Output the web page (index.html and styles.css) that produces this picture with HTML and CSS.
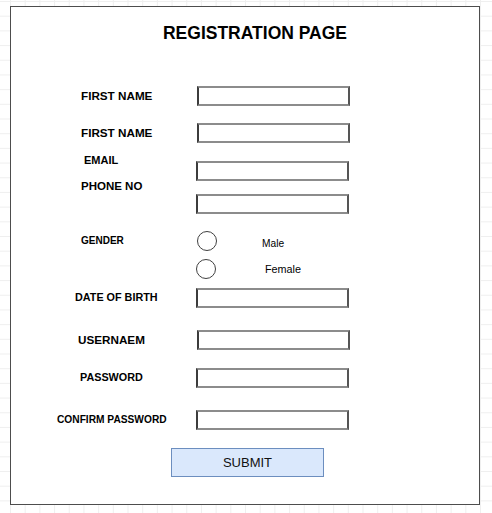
FILE: index.html
```html
<!DOCTYPE html>
<html lang="en">
<head>
<meta charset="utf-8">
<title>Registration Page</title>
<link rel="stylesheet" href="styles.css">
</head>
<body>
<main class="frame">
  <h1 class="title">REGISTRATION PAGE</h1>
  <form class="form">
    <div class="row row-1">
      <label class="cell"><span class="lbl lbl-first">FIRST NAME</span></label>
      <div class="box box-shift"></div>
    </div>
    <div class="row row-2">
      <label class="cell"><span class="lbl lbl-first">FIRST NAME</span></label>
      <div class="box box-shift"></div>
    </div>
    <div class="row row-3">
      <label class="cell"><span class="lbl lbl-email">EMAIL</span></label>
      <div class="box"></div>
    </div>
    <div class="row row-4">
      <label class="cell"><span class="lbl lbl-phone">PHONE NO</span></label>
      <div class="box"></div>
    </div>
    <div class="row row-5">
      <label class="cell"><span class="lbl lbl-gender">GENDER</span></label>
      <span class="radio radio-shift"></span>
      <span class="opt opt-male">Male</span>
    </div>
    <div class="row row-6">
      <span class="cell"></span>
      <span class="radio"></span>
      <span class="opt opt-female">Female</span>
    </div>
    <div class="row row-7">
      <label class="cell"><span class="lbl lbl-dob">DATE OF BIRTH</span></label>
      <div class="box"></div>
    </div>
    <div class="row row-8">
      <label class="cell"><span class="lbl lbl-user">USERNAEM</span></label>
      <div class="box box-shift"></div>
    </div>
    <div class="row row-9">
      <label class="cell"><span class="lbl lbl-pass">PASSWORD</span></label>
      <div class="box"></div>
    </div>
    <div class="row row-10">
      <label class="cell"><span class="lbl lbl-confirm">CONFIRM PASSWORD</span></label>
      <div class="box"></div>
    </div>
    <div class="actions">
      <button type="button" class="submit">SUBMIT</button>
    </div>
  </form>
</main>
</body>
</html>
```

FILE: styles.css
```css
html, body {
  margin: 0;
  padding: 0;
}

body {
  width: 492px;
  height: 513px;
  overflow: hidden;
  font-family: "Liberation Sans", Arial, sans-serif;
  color: #000;
  background-color: #fff;
  background-image:
    linear-gradient(to right, #efefef 1px, transparent 1px),
    linear-gradient(to bottom, #efefef 1px, transparent 1px);
  background-size: 14.7px 14.7px;
  background-position: 10px 1px;
}

.frame {
  box-sizing: border-box;
  margin: 6px 0 0 10px;
  width: 470px;
  height: 499px;
  border: 1px solid #4d4d4d;
  background: #fff;
  display: flex;
  flex-direction: column;
}

.title {
  margin: 0;
  padding: 16px 0 0 20px;
  font-size: 17.5px;
  line-height: 20px;
  font-weight: bold;
  text-align: center;
}

.form {
  display: flex;
  flex-direction: column;
  margin: 0;
}

.row {
  display: flex;
  align-items: center;
  height: 20px;
}

.row-1 { margin-top: 43px; }
.row-2 { margin-top: 17px; }
.row-3 { margin-top: 18px; }
.row-4 { margin-top: 13px; }
.row-5 { margin-top: 17px; }
.row-6 { margin-top: 8px; }
.row-7 { margin-top: 9px; }
.row-8 { margin-top: 22px; }
.row-9 { margin-top: 18px; }
.row-10 { margin-top: 22px; }

.cell {
  flex: none;
  width: 185px;
  box-sizing: border-box;
  display: flex;
  align-items: center;
  align-self: stretch;
}

.lbl {
  display: block;
  font-weight: bold;
  line-height: 1;
  white-space: nowrap;
}

.lbl-first { font-size: 11.7px; margin-left: 70px; }
.lbl-email { font-size: 11px; margin-left: 73px; margin-bottom: 21px; }
.lbl-phone { font-size: 11.5px; margin-left: 70px; margin-bottom: 35px; }
.lbl-gender { font-size: 10px; margin-left: 70px; }
.lbl-dob { font-size: 10.8px; margin-left: 64px; margin-bottom: 2px; }
.lbl-user { font-size: 11.7px; margin-left: 67px; }
.lbl-pass { font-size: 10.8px; margin-left: 69px; margin-bottom: 2px; }
.lbl-confirm { font-size: 10.2px; margin-left: 46px; }

.box {
  box-sizing: border-box;
  width: 153px;
  height: 20px;
  border: 2px solid #8c8c8c;
  border-left-color: #3c3c3c;
  border-right-color: #555;
  background: #fff;
}

.box-shift {
  margin-left: 1px;
}

.radio {
  box-sizing: border-box;
  width: 20px;
  height: 20px;
  border: 1px solid #404040;
  border-radius: 50%;
  background: #fff;
}

.radio-shift {
  margin-left: 1px;
}

.opt {
  line-height: 1;
  white-space: nowrap;
}

.opt-male {
  font-size: 10.2px;
  margin-left: 45px;
  margin-top: 7px;
}

.opt-female {
  font-size: 10.8px;
  margin-left: 49px;
}

.actions {
  display: flex;
  margin-top: 18px;
}

.submit {
  box-sizing: border-box;
  margin-left: 160px;
  width: 153px;
  height: 29px;
  padding: 0;
  border: 1px solid #6c8ebf;
  border-radius: 0;
  background: #dae8fc;
  color: #111;
  font-family: "Liberation Sans", Arial, sans-serif;
  font-size: 13px;
  line-height: 1;
}
```
